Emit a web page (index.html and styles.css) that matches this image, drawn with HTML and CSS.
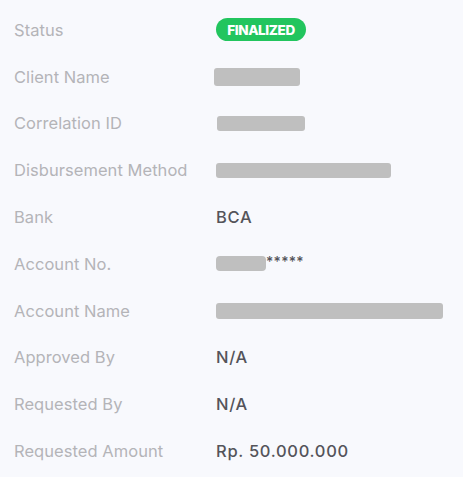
FILE: index.html
```html
<!DOCTYPE html>
<html lang="en">
<head>
<meta charset="utf-8">
<link rel="stylesheet" href="styles.css">
</head>
<body>
<div class="details">
  <div class="row"><div class="label">Status</div><div class="value"><span class="badge">FINALIZED</span></div></div>
  <div class="row"><div class="label">Client Name</div><div class="value"><span class="redact r-client"></span></div></div>
  <div class="row"><div class="label">Correlation ID</div><div class="value"><span class="redact r-corr"></span></div></div>
  <div class="row"><div class="label">Disbursement Method</div><div class="value"><span class="redact r-method"></span></div></div>
  <div class="row"><div class="label">Bank</div><div class="value">BCA</div></div>
  <div class="row"><div class="label">Account No.</div><div class="value acct"><span class="redact r-acct"></span><span class="stars">*****</span></div></div>
  <div class="row"><div class="label">Account Name</div><div class="value"><span class="redact r-name"></span></div></div>
  <div class="row"><div class="label">Approved By</div><div class="value">N/A</div></div>
  <div class="row"><div class="label">Requested By</div><div class="value">N/A</div></div>
  <div class="row"><div class="label">Requested Amount</div><div class="value">Rp. 50.000.000</div></div>
</div>
</body>
</html>
```
FILE: styles.css
```css
html, body {
  margin: 0;
  padding: 0;
  background: #f8f9fd;
}
body {
  font-family: Inter, "Noto Sans", sans-serif;
  width: 463px;
  height: 477px;
  overflow: hidden;
}
.details {
  padding-top: 6.5px;
  padding-left: 14px;
}
.row {
  display: grid;
  grid-template-columns: 202px 1fr;
  align-items: center;
  height: 46.8px;
}
.label {
  color: #b4b4b8;
  font-size: 16.5px;
  letter-spacing: 0.05px;
}
.value {
  color: #54545a;
  font-size: 16.5px;
  font-weight: 500;
  letter-spacing: 0.7px;
  display: flex;
  align-items: center;
}
.badge {
  display: inline-flex;
  align-items: center;
  justify-content: center;
  width: 90px;
  height: 23px;
  border-radius: 12px;
  background: #22c55e;
  color: #fff;
  font-size: 13.5px;
  font-weight: 800;
  letter-spacing: -0.4px;
}
.redact {
  display: inline-block;
  background: #bfbfbf;
  border-radius: 3px;
}
.r-client { width: 86px; height: 18px; margin-left: -2px; }
.r-corr { width: 88px; height: 15px; margin-left: 1px; }
.r-method { width: 175px; height: 15px; }
.r-acct { width: 50px; height: 15px; border-radius: 4px; }
.r-name { width: 227px; height: 16px; }
.stars {
  font-size: 14px;
  letter-spacing: 0.3px;
  margin-top: -4px;
}
```
